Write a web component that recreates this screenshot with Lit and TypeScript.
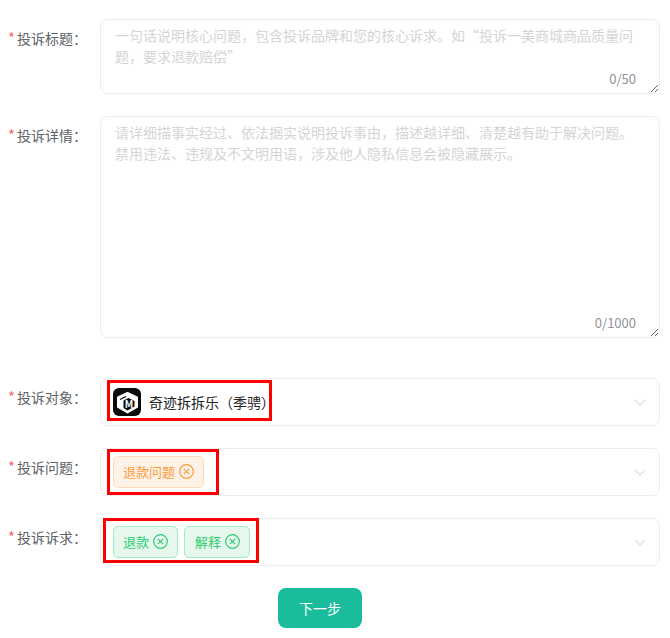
import { html, css, LitElement, svg } from 'lit';
import { customElement } from 'lit/decorators.js';

const closeIcon = svg`<circle cx="7.5" cy="7.5" r="6.8" fill="none" stroke="currentColor" stroke-width="1.2"></circle>
  <path d="M4.8 4.8l5.4 5.4M10.2 4.8l-5.4 5.4" fill="none" stroke="currentColor" stroke-width="1.2"></path>`;

@customElement('app-root')
export class AppRoot extends LitElement {
  static styles = css`
    :host {
      display: block;
      width: 670px;
      height: 638px;
      box-sizing: border-box;
      padding: 19px 10px 0 8px;
      background: #fff;
      font-family: 'Noto Sans CJK SC', 'Noto Sans', sans-serif;
      font-size: 14px;
      color: #606266;
      overflow: hidden;
    }

    .row {
      display: flex;
      margin-bottom: 22px;

      &.wide {
        margin-bottom: 40px;
      }
    }

    .label {
      width: 92px;
      flex: none;
      line-height: 38px;
      white-space: nowrap;

      i {
        font-style: normal;
        color: #f56c6c;
        margin-right: 2px;
        font-size: 15px;
      }
    }

    .field {
      position: relative;
      flex: 1;
      min-width: 0;
    }

    textarea {
      display: block;
      width: 100%;
      box-sizing: border-box;
      padding: 5px 14px;
      border: 1px solid #ebedf0;
      border-radius: 8px;
      outline: none;
      font: inherit;
      line-height: 21px;
      color: #606266;
      background: #fff;

      &::placeholder {
        color: #d4d5d8;
      }

      &.short {
        height: 75px;
      }
      &.long {
        height: 222px;
      }
    }

    .count {
      position: absolute;
      right: 24px;
      bottom: 6px;
      font-size: 13px;
      line-height: 18px;
      color: #909399;
    }

    .select {
      display: flex;
      align-items: center;
      gap: 6px;
      height: 48px;
      box-sizing: border-box;
      padding: 0 13px 0 12px;
      border: 1px solid #ebedf0;
      border-radius: 8px;

      .chevron {
        margin-left: auto;
        width: 12px;
        height: 7px;
      }
    }

    .brand {
      display: flex;
      align-items: center;
      gap: 8px;
      color: #222;

      svg {
        width: 28px;
        height: 28px;
        display: block;
      }
    }

    .chip {
      display: flex;
      align-items: center;
      gap: 4px;
      height: 32px;
      box-sizing: border-box;
      padding: 0 9px 2px;
      border: 1px solid;
      border-radius: 5px;
      font-size: 13px;

      svg {
        width: 15px;
        height: 15px;
        display: block;
      }

      &.orange {
        color: #fa9c3c;
        background: #fef2e6;
        border-color: #fddbb8;
      }
      &.green {
        color: #2ecc71;
        background: #e6f8ee;
        border-color: #a3ebc3;
      }
      &.roomy {
        padding-left: 10px;
      }
    }

    .mark {
      position: absolute;
      border: 3px solid #fe0000;
      box-sizing: border-box;
      pointer-events: none;
    }

    .actions {
      display: flex;
      justify-content: center;
      padding-right: 28px;
    }

    button {
      width: 84px;
      height: 40px;
      border: none;
      border-radius: 8px;
      background: #1abc9c;
      color: #fff;
      font: inherit;
    }
  `;

  private chevron() {
    return html`<svg class="chevron" viewBox="0 0 12 7">
      <path d="M1 1l5 5 5-5" fill="none" stroke="#dcdfe3" stroke-width="1.2"></path>
    </svg>`;
  }

  private chip(text: string, tone: string) {
    return html`<span class="chip ${tone}">${text}<svg viewBox="0 0 15 15">${closeIcon}</svg></span>`;
  }

  render() {
    return html`
      <div class="row">
        <div class="label"><i>*</i>投诉标题：</div>
        <div class="field">
          <textarea
            class="short"
            placeholder="一句话说明核心问题，包含投诉品牌和您的核心诉求。如“投诉一美商城商品质量问题，要求退款赔偿”"
          ></textarea>
          <span class="count">0/50</span>
        </div>
      </div>
      <div class="row wide">
        <div class="label"><i>*</i>投诉详情：</div>
        <div class="field">
          <textarea
            class="long"
            placeholder="请详细描事实经过、依法据实说明投诉事由，描述越详细、清楚越有助于解决问题。禁用违法、违规及不文明用语，涉及他人隐私信息会被隐藏展示。"
          ></textarea>
          <span class="count">0/1000</span>
        </div>
      </div>
      <div class="row">
        <div class="label"><i>*</i>投诉对象：</div>
        <div class="field">
          <div class="select">
            <span class="brand">
              <svg viewBox="0 0 28 28">
                <rect width="28" height="28" rx="6" fill="#0c0c0c"></rect>
                <path
                  d="M14.5 5L24 9.5v9.5l-9.5 5.5L5 19V9.5z"
                  fill="#fff"
                  stroke="#fff"
                  stroke-width="2"
                  stroke-linejoin="round"
                ></path>
                <path d="M10.5 12.5L15.5 10l6 3v5.5l-7 4-4-2.5z" fill="#0c0c0c"></path>
                <path d="M7 11.5l6-3" fill="none" stroke="#0c0c0c" stroke-width="1.2"></path>
                <text x="16" y="20" text-anchor="middle" font-size="10" font-weight="700" fill="#fff">M</text>
              </svg>
              奇迹拆拆乐（季骋）
            </span>
            ${this.chevron()}
          </div>
          <div class="mark" style="left:7px;top:2px;width:165px;height:41px"></div>
        </div>
      </div>
      <div class="row">
        <div class="label"><i>*</i>投诉问题：</div>
        <div class="field">
          <div class="select">${this.chip('退款问题', 'orange')}${this.chevron()}</div>
          <div class="mark" style="left:7px;top:1px;width:112px;height:46px"></div>
        </div>
      </div>
      <div class="row">
        <div class="label"><i>*</i>投诉诉求：</div>
        <div class="field">
          <div class="select">${this.chip('退款', 'green')}${this.chip('解释', 'green roomy')}${this.chevron()}</div>
          <div class="mark" style="left:3px;top:0;width:156px;height:45px"></div>
        </div>
      </div>
      <div class="actions"><button>下一步</button></div>
    `;
  }
}
